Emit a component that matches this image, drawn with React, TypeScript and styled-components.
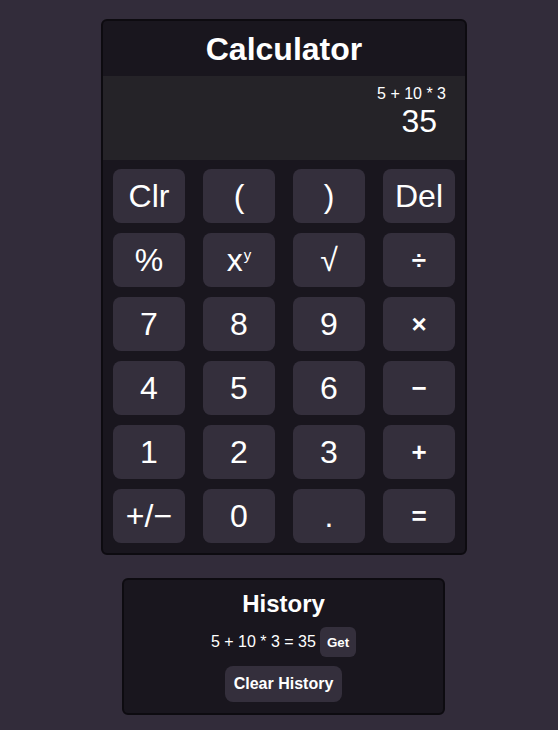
import React from "react";
import styled, { createGlobalStyle } from "styled-components";

const Global = createGlobalStyle`
  html, body {
    margin: 0;
    padding: 0;
    background: #322c3a;
    font-family: "Liberation Sans", Arial, sans-serif;
    color: #ffffff;
  }
  * { box-sizing: border-box; }
`;

const Page = styled.div`
  display: flex;
  flex-direction: column;
  align-items: center;
  padding-top: 19px;
  gap: 23px;
  min-height: 730px;
`;

const Card = styled.div`
  width: 366px;
  margin-left: 10px;
  background: #19161e;
  border: 2px solid #0d0b10;
  border-radius: 6px;
  overflow: hidden;
`;

const Header = styled.h1`
  margin: 0;
  height: 55px;
  padding-top: 10px;
  text-align: center;
  font-size: 32px;
  font-weight: bold;
  line-height: 37px;
  color: #ffffff;
`;

const Display = styled.div`
  height: 84px;
  background: #252328;
  padding: 9px 19px 0 0;
  display: flex;
  flex-direction: column;
  align-items: flex-end;
`;

const Expression = styled.div`
  font-size: 16px;
  line-height: 18px;
`;

const Result = styled.div`
  font-size: 32px;
  line-height: 37px;
  margin-right: 9px;
`;

const Keypad = styled.div`
  display: grid;
  grid-template-columns: repeat(4, 72px);
  grid-auto-rows: 54px;
  column-gap: 18px;
  row-gap: 10px;
  padding: 9px 10px 10px;
`;

const Key = styled.button<{ $op?: boolean }>`
  border: none;
  border-radius: 8px;
  background: #342f3c;
  color: #ffffff;
  font-family: "Liberation Sans", Arial, sans-serif;
  font-size: ${(p) => (p.$op ? "26px" : "32px")};
  font-weight: ${(p) => (p.$op ? "bold" : "normal")};
  display: flex;
  align-items: center;
  justify-content: center;
  padding: 0;
  cursor: pointer;

  sup {
    font-size: 15px;
    margin-left: 1px;
    position: relative;
    top: -6px;
  }
`;

const HistoryCard = styled.div`
  width: 323px;
  margin-left: 9px;
  background: #19161e;
  border: 2px solid #0d0b10;
  border-radius: 6px;
  padding: 10px 10px 11px;
  display: flex;
  flex-direction: column;
  align-items: center;
`;

const HistoryTitle = styled.h2`
  margin: 0 0 9px;
  font-size: 24px;
  line-height: 28px;
  font-weight: bold;
`;

const Entry = styled.div`
  display: flex;
  align-items: center;
  gap: 4px;
  font-size: 16px;
  height: 30px;
  margin-bottom: 9px;
`;

const SmallButton = styled.button`
  border: none;
  border-radius: 6px;
  background: #342f3c;
  color: #ffffff;
  font-family: "Liberation Sans", Arial, sans-serif;
  font-weight: bold;
  font-size: 13.33px;
  height: 30px;
  padding: 0 7px;
  cursor: pointer;
`;

const ClearButton = styled(SmallButton)`
  font-size: 16px;
  height: 36px;
  padding: 0 9px;
  border-radius: 8px;
`;

const keys: { label: React.ReactNode; op?: boolean }[] = [
  { label: "Clr" },
  { label: "(" },
  { label: ")" },
  { label: "Del" },
  { label: "%" },
  { label: <>x<sup>y</sup></> },
  { label: "√" },
  { label: "÷", op: true },
  { label: "7" },
  { label: "8" },
  { label: "9" },
  { label: "×", op: true },
  { label: "4" },
  { label: "5" },
  { label: "6" },
  { label: "−", op: true },
  { label: "1" },
  { label: "2" },
  { label: "3" },
  { label: "+", op: true },
  { label: "+/−" },
  { label: "0" },
  { label: "." },
  { label: "=", op: true },
];

export default function App() {
  return (
    <>
      <Global />
      <Page>
        <Card>
          <Header>Calculator</Header>
          <Display>
            <Expression>5 + 10 * 3</Expression>
            <Result>35</Result>
          </Display>
          <Keypad>
            {keys.map((k, i) => (
              <Key key={i} $op={k.op}>
                {k.label}
              </Key>
            ))}
          </Keypad>
        </Card>
        <HistoryCard>
          <HistoryTitle>History</HistoryTitle>
          <Entry>
            <span>5 + 10 * 3 = 35</span>
            <SmallButton>Get</SmallButton>
          </Entry>
          <ClearButton>Clear History</ClearButton>
        </HistoryCard>
      </Page>
    </>
  );
}
